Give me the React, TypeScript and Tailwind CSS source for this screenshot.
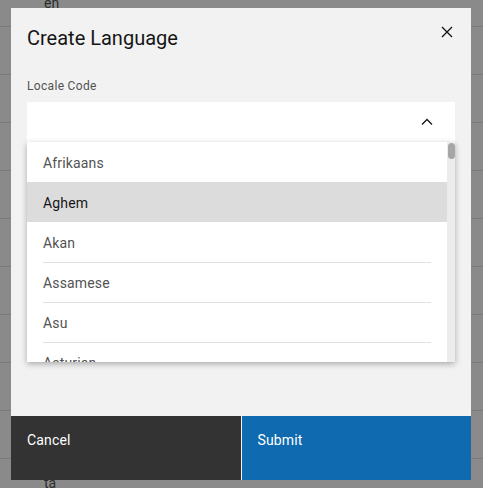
import React from 'react';

const rows = ['en', '', '', '', '', '', '', '', '', '', 'ta'];

const options = ['Afrikaans', 'Aghem', 'Akan', 'Assamese', 'Asu', 'Asturian'];

function CloseIcon() {
  return (
    <svg width="12" height="12" viewBox="0 0 12 12" fill="none">
      <path d="M1 1L11 11M11 1L1 11" stroke="#161616" strokeWidth="1.4" />
    </svg>
  );
}

function ChevronUp() {
  return (
    <svg width="12" height="8" viewBox="0 0 12 8" fill="none">
      <path d="M1 6.5L6 1.5L11 6.5" stroke="#161616" strokeWidth="1.3" />
    </svg>
  );
}

function App() {
  const hovered = 1;

  return (
    <div
      className="relative h-[488px] w-full overflow-hidden bg-[#8a8a8a]"
      style={{ fontFamily: 'Roboto, "Liberation Sans", sans-serif' }}
    >
      {/* Page table behind the overlay */}
      <div className="mt-[-21px] flex flex-col">
        {rows.map((r, i) => (
          <div
            key={i}
            className="flex h-[48px] items-center border-b border-[#7b7b7b] pl-[44px] text-sm text-[#2c2c2c]"
          >
            {r}
          </div>
        ))}
      </div>

      {/* Modal */}
      <div className="absolute left-[11px] top-[8px] flex h-[472px] w-[460px] flex-col bg-[#f2f2f2]">
        <div className="flex items-start justify-between pl-4 pt-4">
          <h2 className="text-[20px] leading-[28px] text-[#161616]">Create Language</h2>
          <button className="flex h-[48px] w-[48px] items-center justify-center -mt-4">
            <CloseIcon />
          </button>
        </div>

        <div className="px-4 pt-[22px]">
          <label className="mb-2 block text-xs leading-4 tracking-[0.32px] text-[#525252]">
            Locale Code
          </label>
          <div className="relative">
            <div className="flex h-[40px] items-center justify-end bg-white pr-[22px]">
              <ChevronUp />
            </div>
            <div className="absolute left-0 top-[40px] z-10 flex h-[220px] w-full bg-white shadow-[0_2px_6px_rgba(0,0,0,0.3)]">
              <div className="flex-1 overflow-hidden">
                {options.map((o, i) => {
                  const isHover = i === hovered;
                  const showBorder = i > 0 && i !== hovered && i !== hovered + 1;
                  return (
                    <div
                      key={o}
                      className={`h-[40px] px-4 ${isHover ? 'bg-[#dcdcdc]' : 'bg-white'}`}
                    >
                      <div
                        className={`flex h-full items-center border-t text-sm tracking-[0.16px] ${
                          showBorder ? 'border-[#e0e0e0]' : 'border-transparent'
                        } ${isHover ? 'text-[#161616]' : 'text-[#525252]'}`}
                      >
                        {o}
                      </div>
                    </div>
                  );
                })}
              </div>
              <div className="w-[8px] bg-[#ececec] pt-[1px]">
                <div className="mx-auto h-[16px] w-[7px] rounded-[4px] bg-[#a6a6a6]" />
              </div>
            </div>
          </div>
        </div>

        <div className="mt-auto flex h-[64px] gap-px">
          <button className="flex flex-1 items-start self-stretch bg-[#333333] pl-4 pt-[15px] text-left text-sm leading-[18px] tracking-[0.16px] text-white">
            Cancel
          </button>
          <button className="flex flex-1 items-start self-stretch bg-[#0f6ab0] pl-4 pt-[15px] text-left text-sm leading-[18px] tracking-[0.16px] text-white">
            Submit
          </button>
        </div>
      </div>
    </div>
  );
}

export default App;
